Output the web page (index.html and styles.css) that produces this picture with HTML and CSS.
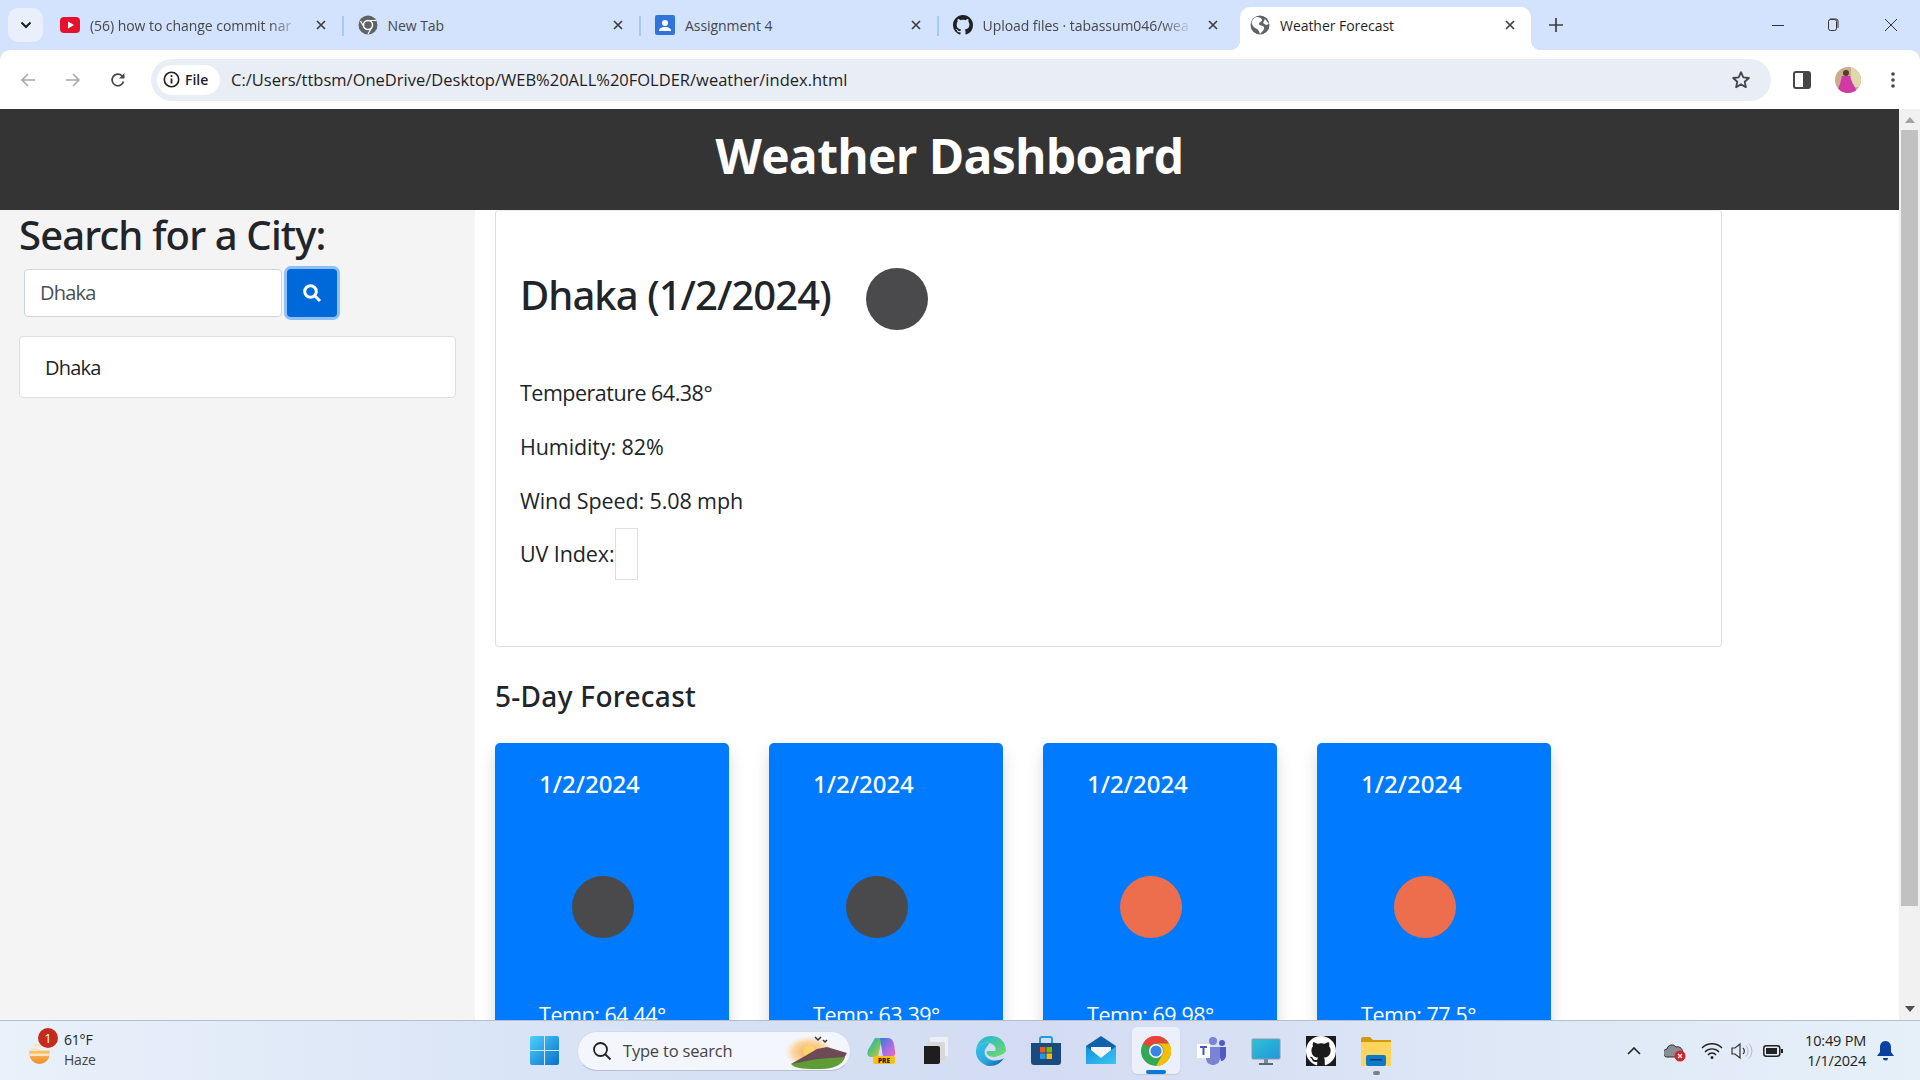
FILE: index.html
```html
<!DOCTYPE html>
<html lang="en">
<head>
<meta charset="utf-8">
<title>Weather Forecast</title>
<link rel="stylesheet" href="styles.css">
</head>
<body>
<svg class="defs" width="0" height="0" aria-hidden="true">
  <defs>
    <symbol id="x" viewBox="0 0 12 12"><path d="M2 2l8 8M10 2l-8 8" stroke="#3c4043" stroke-width="1.7" fill="none"/></symbol>
    <symbol id="globe" viewBox="0 0 20 20"><circle cx="10" cy="10" r="9.5" fill="#5f6368"/><path d="M6 2c3 0 6 1 6 3s-3 2-3 4 4 1 5 3-2 5-4 7c-1-2-1-4-3-5S3 12 2 9s2-6 4-7zM15 4l4 5-3 1-3-2z" fill="#fff"/></symbol>
    <symbol id="gh" viewBox="0 0 16 16"><path d="M8 0C3.58 0 0 3.58 0 8c0 3.54 2.29 6.53 5.47 7.59.4.07.55-.17.55-.38 0-.19-.01-.82-.01-1.49-2.01.37-2.53-.49-2.69-.94-.09-.23-.48-.94-.82-1.13-.28-.15-.68-.52-.01-.53.63-.01 1.08.58 1.23.82.72 1.21 1.87.87 2.33.66.07-.52.28-.87.51-1.07-1.78-.2-3.64-.89-3.64-3.95 0-.87.31-1.59.82-2.15-.08-.2-.36-1.02.08-2.12 0 0 .67-.21 2.2.82.64-.18 1.32-.27 2-.27.68 0 1.36.09 2 .27 1.53-1.04 2.2-.82 2.2-.82.44 1.1.16 1.92.08 2.12.51.56.82 1.27.82 2.15 0 3.07-1.87 3.75-3.65 3.95.29.25.54.73.54 1.48 0 1.07-.01 1.93-.01 2.2 0 .21.15.46.55.38A8.013 8.013 0 0016 8c0-4.42-3.58-8-8-8z"/></symbol>
    <linearGradient id="edgeG" x1="0" y1="0" x2="1" y2="1"><stop offset="0" stop-color="#35c1f1"/><stop offset=".55" stop-color="#2ea8dc"/><stop offset="1" stop-color="#0c59a4"/></linearGradient>
    <linearGradient id="edgeT" x1="0" y1="0" x2="1" y2="1"><stop offset="0" stop-color="#1bb5e8"/><stop offset="1" stop-color="#74dc5c"/></linearGradient>
    <linearGradient id="winG" x1="0" y1="0" x2="1" y2="1"><stop offset="0" stop-color="#4fd0fb"/><stop offset="1" stop-color="#0671cc"/></linearGradient>
    <linearGradient id="copG" x1="0" y1="0" x2="1" y2="1"><stop offset="0" stop-color="#1fa4e8"/><stop offset=".5" stop-color="#5dc46a"/><stop offset="1" stop-color="#f9b83a"/></linearGradient>
    <linearGradient id="copH" x1="0" y1="0" x2="1" y2="1"><stop offset="0" stop-color="#2a7de0"/><stop offset=".6" stop-color="#b46be0"/><stop offset="1" stop-color="#ee6fb0"/></linearGradient>
    <linearGradient id="monG" x1="0" y1="0" x2="1" y2="1"><stop offset="0" stop-color="#2fc1d6"/><stop offset="1" stop-color="#1f97d8"/></linearGradient>
    <linearGradient id="mailG" x1="0" y1="0" x2="1" y2="1"><stop offset="0" stop-color="#0f8fdc"/><stop offset="1" stop-color="#3cc6f4"/></linearGradient>
    <linearGradient id="sunG" x1="0" y1="0" x2="0" y2="1"><stop offset="0" stop-color="#fbc46a"/><stop offset="1" stop-color="#f08a28"/></linearGradient>
    <radialGradient id="glowG"><stop offset="0" stop-color="#f9a84e"/><stop offset=".7" stop-color="#fbd9a8"/><stop offset="1" stop-color="#fbe6c8" stop-opacity="0"/></radialGradient>
  </defs>
</svg>

<header class="tabstrip">
  <button class="tab-search"><svg width="12" height="8" viewBox="0 0 12 8"><path d="M1.5 1.5L6 6l4.5-4.5" fill="none" stroke="#1f1f1f" stroke-width="2"/></svg></button>
  <div class="tabs">
    <div class="tab sep">
      <svg class="fav" viewBox="0 0 20 20"><rect y="2" width="20" height="16" rx="4" fill="#e8112d"/><path d="M8 6.5v7l6-3.5z" fill="#fff"/></svg>
      <span class="tab-title fade">(56) how to change commit nar</span>
      <svg class="tab-x"><use href="#x"/></svg>
    </div>
    <div class="tab sep">
      <svg class="fav" viewBox="0 0 20 20"><circle cx="10" cy="10" r="9.5" fill="#5f6368"/><path d="M10 5.5h8M6.2 12.5L2.5 6M13.8 12.500L10 19" stroke="#fff" stroke-width="1.2"/><circle cx="10" cy="10" r="4.5" fill="#5f6368" stroke="#fff" stroke-width="1.5"/></svg>
      <span class="tab-title">New Tab</span>
      <svg class="tab-x"><use href="#x"/></svg>
    </div>
    <div class="tab sep">
      <svg class="fav" viewBox="0 0 20 20"><rect width="20" height="20" rx="2" fill="#3273dc"/><circle cx="10" cy="8" r="3" fill="#fff"/><path d="M4 16c0-3 3-4 6-4s6 1 6 4z" fill="#fff"/></svg>
      <span class="tab-title">Assignment 4</span>
      <svg class="tab-x"><use href="#x"/></svg>
    </div>
    <div class="tab">
      <svg class="fav"><use href="#gh"/></svg>
      <span class="tab-title fade">Upload files · tabassum046/wea</span>
      <svg class="tab-x"><use href="#x"/></svg>
    </div>
    <div class="tab tab-active">
      <svg class="fav"><use href="#globe"/></svg>
      <span class="tab-title">Weather Forecast</span>
      <svg class="tab-x"><use href="#x"/></svg>
    </div>
    <svg class="new-tab" width="14" height="14" viewBox="0 0 14 14"><path d="M7 0v14M0 7h14" stroke="#3c4043" stroke-width="1.7"/></svg>
  </div>
  <div class="win-controls">
    <svg width="12" height="12" viewBox="0 0 12 12"><path d="M0 6.500h12" stroke="#333" stroke-width="1"/></svg>
    <svg width="14" height="14" viewBox="0 0 14 14"><rect x="2.500" y="1.500" width="8" height="11" rx="2" fill="#d3e3fd" stroke="#333"/><path d="M5 1.500V1h6a2 2 0 012 2v7" fill="none" stroke="#333" transform="translate(-1 0)"/></svg>
    <svg width="14" height="14" viewBox="0 0 14 14"><path d="M1 1l12 12M13 1L1 13" stroke="#333" stroke-width="1"/></svg>
  </div>
</header>

<nav class="toolbar">
  <svg class="nav-ico" viewBox="0 0 16 16"><path d="M15 8H2M8 2L2 8l6 6" fill="none" stroke="#a6a8ab" stroke-width="1.6"/></svg>
  <svg class="nav-ico" viewBox="0 0 16 16"><path d="M1 8h13M8 2l6 6-6 6" fill="none" stroke="#a6a8ab" stroke-width="1.6"/></svg>
  <svg class="nav-ico" viewBox="0 0 16 16"><path d="M13.500 9.500A5.800 5.800 0 1112 3.800" fill="none" stroke="#444746" stroke-width="1.7"/><path d="M14.500 1v5.500H9z" fill="#444746"/></svg>
  <div class="omnibox">
    <div class="chip">
      <svg width="17" height="17" viewBox="0 0 17 17"><circle cx="8.500" cy="8.500" r="7.200" fill="none" stroke="#1f1f1f" stroke-width="1.600"/><path d="M8.500 7.500v5" stroke="#1f1f1f" stroke-width="1.800"/><circle cx="8.500" cy="5" r="1.100" fill="#1f1f1f"/></svg>
      <span>File</span>
    </div>
    <span class="url">C:/Users/ttbsm/OneDrive/Desktop/WEB%20ALL%20FOLDER/weather/index.html</span>
    <svg class="star" width="20" height="20" viewBox="0 0 20 20"><path d="M10 2.200l2.300 5.200 5.600.6-4.200 3.700 1.200 5.500-4.900-2.800-4.900 2.800 1.200-5.500L2.100 8l5.600-.6z" fill="none" stroke="#444746" stroke-width="1.800" stroke-linejoin="round"/></svg>
  </div>
  <svg class="panel-ico" width="18" height="18" viewBox="0 0 18 18"><rect x="1" y="1" width="16" height="16" rx="2" fill="#fff" stroke="#444746" stroke-width="2"/><rect x="10" y="1" width="7" height="16" fill="#444746"/></svg>
  <svg class="avatar" width="26" height="26" viewBox="0 0 26 26"><defs><clipPath id="av"><circle cx="13" cy="13" r="13"/></clipPath></defs><g clip-path="url(#av)"><rect width="26" height="26" fill="#c9ad8c"/><rect x="16" width="10" height="20" fill="#e0d6b0"/><circle cx="11" cy="6" r="3" fill="#5a3a2a"/><path d="M7 9h8l2 6 6 11H1l4-9z" fill="#d13aa5"/></g></svg>
  <svg class="kebab" width="4" height="16" viewBox="0 0 4 16"><circle cx="2" cy="2" r="1.800" fill="#444746"/><circle cx="2" cy="8" r="1.800" fill="#444746"/><circle cx="2" cy="14" r="1.800" fill="#444746"/></svg>
</nav>

<div class="viewport">
  <div class="page">
    <div class="dash-header"><h1>Weather Dashboard</h1></div>
    <div class="dash-body">
      <aside class="sidebar">
        <h2 class="search-title">Search for a City:</h2>
        <form class="search-form">
          <div class="search-input">Dhaka</div>
          <button class="search-btn" type="button"><svg width="20" height="20" viewBox="0 0 20 20"><circle cx="8.500" cy="8.500" r="5.800" fill="none" stroke="#fff" stroke-width="3"/><path d="M13 13l5 5" stroke="#fff" stroke-width="3"/></svg></button>
        </form>
        <div class="history-item">Dhaka</div>
      </aside>
      <main class="main">
        <section class="today">
          <div class="today-head">
            <h2>Dhaka (1/2/2024)</h2>
            <span class="dot dot-dark"></span>
          </div>
          <p class="temp">Temperature 64.38°</p>
          <p>Humidity: 82%</p>
          <p>Wind Speed: 5.08 mph</p>
          <div class="uv"><span>UV Index:</span><span class="uv-box"></span></div>
        </section>
        <h3 class="forecast-title">5-Day Forecast</h3>
        <div class="forecast">
          <article class="day">
            <h4>1/2/2024</h4>
            <div class="day-icon"><span class="dot dot-dark"></span></div>
            <p>Temp: 64.44°</p>
          </article>
          <article class="day">
            <h4>1/2/2024</h4>
            <div class="day-icon"><span class="dot dot-dark"></span></div>
            <p>Temp: 63.39°</p>
          </article>
          <article class="day">
            <h4>1/2/2024</h4>
            <div class="day-icon"><span class="dot dot-orange"></span></div>
            <p>Temp: 69.98°</p>
          </article>
          <article class="day">
            <h4>1/2/2024</h4>
            <div class="day-icon"><span class="dot dot-orange"></span></div>
            <p>Temp: 77.5°</p>
          </article>
        </div>
      </main>
    </div>
  </div>
  <div class="scrollbar">
    <svg width="10" height="6" viewBox="0 0 10 6"><path d="M5 0l5 6H0z" fill="#a3a3a3"/></svg>
    <div class="thumb"></div>
    <svg class="arrow-down" width="10" height="6" viewBox="0 0 10 6"><path d="M0 0h10L5 6z" fill="#505050"/></svg>
  </div>
</div>

<footer class="taskbar">
  <div class="tb-weather">
    <div class="weather-ico">
      <svg width="29" height="22" viewBox="0 0 30 26"><path d="M3 10h24v4a12 12 0 01-24 0z" fill="url(#sunG)"/><path d="M8 4h12M5 9h9M3 15h24" stroke="#f7e5bd" stroke-width="3"/></svg>
      <span class="badge">1</span>
    </div>
    <div class="weather-txt"><span>61°F</span><span class="haze">Haze</span></div>
  </div>
  <div class="tb-center">
    <svg class="tb-ico win" viewBox="0 0 29 29"><path d="M0 2a2 2 0 012-2h12v14H0zM15 0h12a2 2 0 012 2v12H15zM0 15h14v14H2a2 2 0 01-2-2zM15 15h14v12a2 2 0 01-2 2H15z" fill="url(#winG)"/></svg>
    <div class="search-pill">
      <svg width="20" height="20" viewBox="0 0 20 20"><circle cx="8.500" cy="8.500" r="6.500" fill="none" stroke="#222" stroke-width="1.800"/><path d="M13 13l5.500 5.500" stroke="#222" stroke-width="1.800"/></svg>
      <span>Type to search</span>
      <svg class="scene" width="64" height="38" viewBox="0 0 64 38"><ellipse cx="24" cy="20" rx="24" ry="16" fill="url(#glowG)"/><circle cx="24" cy="19" r="6" fill="#fcd56a"/><path d="M6 32l14-8 12-7 10-2 20 6-3 5-30 6z" fill="#6d4a55"/><path d="M6 32l26-5 28-2c-2 8-12 12-24 12-14 0-26 0-30-5z" fill="#5f9c36"/><path d="M30 5l3 3 3-3M38 8l2 2 2-2" fill="none" stroke="#40302a" stroke-width="1.500"/></svg>
    </div>
    <svg class="tb-ico copilot" viewBox="0 0 30 30"><path d="M9 2h7l-4 19H5C1 21 1 17 2 14z" fill="url(#copG)"/><path d="M14 2h8c3 0 5 2 6 6l1 7c1 4-1 6-4 6h-8z" fill="url(#copH)"/><rect x="7" y="20" width="22" height="8" rx="2" fill="#fbbf10"/><text x="18" y="26.500" class="pre">PRE</text></svg>
    <svg class="tb-ico" viewBox="0 0 30 30"><rect x="9" y="1" width="18" height="19" rx="1" fill="#f4f4f6" opacity=".75"/><rect x="6" y="6" width="18" height="19" rx="1" fill="#d8d8da"/><path d="M3 10h14a2 2 0 012 2v14a2 2 0 01-2 2H3z" fill="#1e1e1e"/></svg>
    <svg class="tb-ico" viewBox="0 0 30 30"><path d="M15 0C7 0 1 6 0 14c3-6 8-8 13-7 6 1 8 6 6 8h-7c-1 0-2 1-1 3 2 3 7 4 11 2 3-1 6-2 8-5C30 6 24 0 15 0z" fill="url(#edgeT)"/><path d="M0 14c-1 8 6 16 14 16 6 0 11-3 14-8-3 2-10 4-15 1-4-2-6-7-3-11 1-2 3-3 3-5C7 6 2 9 0 14z" fill="url(#edgeG)"/></svg>
    <svg class="tb-ico" viewBox="0 0 30 30"><path d="M9 8V3a2 2 0 012-2h8a2 2 0 012 2v5" fill="none" stroke="#1f9fe0" stroke-width="2"/><path d="M0 7h30v19a3 3 0 01-3 3H3a3 3 0 01-3-3z" fill="#1b4a80"/><rect x="9" y="11" width="5.500" height="5.500" fill="#ef5a24"/><rect x="15.500" y="11" width="5.500" height="5.500" fill="#7fba00"/><rect x="9" y="17.500" width="5.500" height="5.500" fill="#1e9bf0"/><rect x="15.500" y="17.500" width="5.500" height="5.500" fill="#ffb900"/></svg>
    <svg class="tb-ico" viewBox="0 0 30 30"><path d="M15 0L30 10v18H0V10z" fill="#0c62ad"/><path d="M5 11h20v8l-10 5-10-5z" fill="#f4f4f4"/><path d="M0 10l15 12 15-12v18H0z" fill="url(#mailG)"/></svg>
    <div class="chrome-slot">
      <svg width="30" height="30" viewBox="0 0 30 30"><circle cx="15" cy="15" r="15" fill="#34a853"/><path d="M2 7.500A15 15 0 0128 7.500H15a7.500 7.500 0 00-6.500 3.700z" fill="#ea4335"/><path d="M28 7.500A15 15 0 0115 30l6.500-11.300A7.500 7.500 0 0021.500 11 7.500 7.500 0 0015 7.500z" fill="#fbbc04"/><circle cx="15" cy="15" r="7" fill="#fff"/><circle cx="15" cy="15" r="5.500" fill="#3b82e8"/></svg>
      <span class="chrome-bar"></span>
    </div>
    <svg class="tb-ico teams" viewBox="0 0 30 30"><circle cx="16" cy="5" r="4" fill="#7b83d4"/><circle cx="25" cy="7" r="3" fill="#5059c9"/><path d="M20 11h9v8c0 4-3 6-5 6z" fill="#5059c9"/><path d="M9 11h14v11c0 5-4 7-7 7s-7-2-7-7z" fill="#7b83d4"/><rect y="8" width="13" height="14" fill="#fff"/><path d="M3 11h7M6.500 11v8" stroke="#4b53bc" stroke-width="2"/></svg>
    <svg class="tb-ico" viewBox="0 0 30 30"><rect x="1" y="3" width="28" height="20" rx="1" fill="url(#monG)" stroke="#8c9aa8"/><rect x="13" y="23" width="4" height="4" fill="#7c8a94"/><rect x="8" y="27" width="14" height="2" fill="#5c6870"/></svg>
    <div class="gh-tile"><svg width="30" height="30"><use href="#gh"/></svg></div>
    <div class="explorer">
      <svg width="30" height="30" viewBox="0 0 30 30"><path d="M0 3a2 2 0 012-2h7l3 3h18v4H0z" fill="#d39b0a"/><rect y="6" width="30" height="24" fill="#fdd45c"/><rect x="5" y="19" width="20" height="11" rx="2" fill="#0f78c9"/><rect x="9" y="23" width="12" height="1.500" fill="#0b3f70"/></svg>
      <span class="run-dot"></span>
    </div>
  </div>
  <div class="tray">
    <svg width="14" height="8" viewBox="0 0 14 8"><path d="M1 7l6-6 6 6" fill="none" stroke="#222" stroke-width="1.600"/></svg>
    <svg class="tray-cloud" width="22" height="22" viewBox="0 0 22 22"><path d="M4 17a4 4 0 01-1-8 5 5 0 019-2 5 5 0 013 10z" fill="#8a8d92" stroke="#333" stroke-width="1"/><circle cx="16" cy="16" r="5.500" fill="#d6202c"/><path d="M14 14l4 4M18 14l-4 4" stroke="#fff" stroke-width="1.400"/></svg>
    <svg class="tray-wifi" width="22" height="18" viewBox="0 0 22 18"><path d="M1 6a14 14 0 0120 0M4 10a9.500 9.500 0 0114 0M7 13a5 5 0 018 0" fill="none" stroke="#222" stroke-width="1.400"/><circle cx="11" cy="15.500" r="1.500" fill="#222"/></svg>
    <svg class="tray-vol" width="22" height="18" viewBox="0 0 22 18"><path d="M1 6h3l5-4v14l-5-4H1z" fill="none" stroke="#333" stroke-width="1.200"/><path d="M12 6a4 4 0 010 6" fill="none" stroke="#333" stroke-width="1.200"/><path d="M15 3.500a8 8 0 010 11M18 1.500a11 11 0 010 15" fill="none" stroke="#b5bcc6" stroke-width="1"/></svg>
    <svg class="tray-bat" width="20" height="12" viewBox="0 0 20 12"><rect x=".8" y=".8" width="16" height="10.400" rx="2.500" fill="none" stroke="#222" stroke-width="1.500"/><rect x="3" y="3" width="11" height="6" fill="#222"/><rect x="18" y="4" width="2" height="4" fill="#222"/></svg>
    <div class="clock"><span>10:49 PM</span><span>1/1/2024</span></div>
    <svg class="bell" width="17" height="20" viewBox="0 0 17 20"><path d="M8.500 0C5 0 3 3 3 6v5L0 15h17l-3-4V6c0-3-2-6-5.500-6z" fill="#0b3fa0"/><path d="M6 17h5a2.500 2.500 0 01-5 0z" fill="#0b3fa0"/></svg>
  </div>
</footer>
</body>
</html>
```
FILE: styles.css
```css
* { box-sizing: border-box; }
html, body { height: 100%; }
body {
  margin: 0;
  height: 100vh;
  overflow: hidden;
  display: flex;
  flex-direction: column;
  background: #d3e3fd;
  font-family: "Open Sans", "Noto Sans", "Liberation Sans", sans-serif;
  color: #212529;
}
.defs { position: absolute; }
h1, h2, h3, h4, p { margin: 0; }

/* Tab strip */
.tabstrip { height: 50px; flex: none; display: flex; position: relative; }
.tab-search {
  width: 35px; height: 34px; margin: 8px 3px 0 8px; padding: 0; border: 0;
  border-radius: 10px; background: #e9f0fc;
  display: flex; align-items: center; justify-content: center;
}
.tabs { display: flex; align-items: center; height: 50px; flex: 1; }
.tab {
  width: 297.5px; height: 37px; margin-top: 13px; padding: 0 17px 0 14px;
  display: flex; align-items: center; position: relative; font-size: 14px; color: #45474a;
}
.sep::after {
  content: ""; position: absolute; right: 0; top: 3px; height: 20px; width: 2px; background: #a8c7fa;
}
.fav { width: 20px; height: 20px; flex: none; margin-right: 10px; margin-top: -13px; fill: #202124; }
.tab-title { flex: 1; white-space: nowrap; margin-top: -13px; letter-spacing: -.05px; }
.fade { -webkit-mask-image: linear-gradient(to right, #000 85%, transparent 100%); mask-image: linear-gradient(to right, #000 85%, transparent 100%); }
.tab-x { width: 12px; height: 12px; flex: none; margin-top: -13px; margin-left: 14px; }
.tab-active {
  width: 291px; margin-left: 4px; padding-left: 10px; padding-right: 15px; height: 43px; margin-top: 7px;
  background: #fff; border-radius: 10px 10px 0 0; color: #1f1f1f;
}
.tab-active .fav, .tab-active .tab-title, .tab-active .tab-x { margin-top: -7px; }
.tab-active::before, .tab-active::after {
  content: ""; position: absolute; bottom: 0; width: 10px; height: 10px;
}
.tab-active::before { left: -10px; background: radial-gradient(circle at 0 0, transparent 10px, #fff 10.5px); }
.tab-active::after { right: -10px; background: radial-gradient(circle at 100% 0, transparent 10px, #fff 10.5px); }
.new-tab { margin: 0 0 0 18px; flex: none; }
.win-controls {
  position: absolute; right: 22px; top: 18px; display: flex; gap: 42px; align-items: center;
}
.win-controls svg:last-child { margin-left: 2px; }

/* Toolbar */
.toolbar {
  height: 59px; flex: none; background: #fff; border-radius: 10px 10px 0 0;
  display: flex; align-items: center; padding-left: 20px;
}
.nav-ico { width: 16px; height: 16px; margin-right: 29px; flex: none; }
.nav-ico:nth-of-type(3) { margin-right: 25px; }
.omnibox {
  width: 1620px; height: 42px; border-radius: 21px; background: #e9edf6; flex: none;
  display: flex; align-items: center; padding: 0 20px 0 6px; font-size: 16.5px;
}
.chip {
  width: 63px; height: 30px; border-radius: 15px; background: #fff; flex: none;
  display: flex; align-items: center; gap: 5px; padding-left: 6px; font-size: 14px; font-weight: 600; color: #1f1f1f;
}
.url { flex: 1; margin-left: 11px; color: #1f1f1f; white-space: nowrap; }
.star { flex: none; }
.panel-ico { margin-left: 22px; flex: none; }
.avatar { margin-left: 24px; flex: none; }
.kebab { margin-left: 30px; flex: none; }

/* Page viewport */
.viewport { height: 911px; flex: none; display: flex; background: #fff; overflow: hidden; }
.page { width: 1899px; flex: none; display: flex; flex-direction: column; }
.dash-header {
  height: 101px; flex: none; background: #343434; color: #fff; text-align: center;
  display: flex; align-items: center; justify-content: center; padding-bottom: 8px;
}
.dash-header h1 { font-size: 48px; line-height: 58px; font-weight: 700; letter-spacing: -.7px; }
.dash-body { flex: 1; display: flex; min-height: 0; }
.sidebar { width: 475px; flex: none; background: #f4f4f4; padding: 0 19px 0 19px; }
.search-title { font-family: "Noto Sans", "Open Sans", sans-serif; font-size: 40px; line-height: 48px; font-weight: 500; margin-bottom: 10px; margin-top: 1px; letter-spacing: -.85px; }
.search-form { display: flex; margin-left: 5px; align-items: center; }
.search-input {
  width: 258px; height: 48px; border: 1px solid #ced4da; border-radius: 4px; background: #fff;
  padding-left: 15px; font-size: 20px; line-height: 46px; color: #495057; letter-spacing: -.8px;
}
.search-btn {
  width: 50px; height: 48px; margin-left: 5px; border: 0; padding: 0; border-radius: 4px; background: #0069d9;
  box-shadow: 0 0 0 3px #8dc0fb; display: flex; align-items: center; justify-content: center;
}
.history-item {
  height: 62px; margin-top: 19px; border: 1px solid #dfdfdf; border-radius: 4px; background: #fff;
  padding-left: 25px; font-size: 20px; line-height: 61px; letter-spacing: -.8px;
}
.main { flex: 1; padding-left: 20px; min-width: 0; }
.today {
  width: 1227px; height: 437px; border: 1px solid #dfdfdf; border-top-color: #eee; border-radius: 4px;
  padding: 57px 0 0 24px;
}
.today-head { display: flex; align-items: flex-start; margin-bottom: 48px; }
.today-head h2 { font-family: "Noto Sans", "Open Sans", sans-serif; font-size: 40px; line-height: 54px; font-weight: 500; letter-spacing: -.95px; }
.dot { display: block; width: 62px; height: 62px; border-radius: 50%; }
.dot-dark { background: #4a4a4c; }
.dot-orange { background: #ec6e4c; }
.today-head .dot { margin-left: 35px; }
.today p { font-size: 21.5px; line-height: 30px; margin-bottom: 24px; letter-spacing: -.1px; }
.today .temp { letter-spacing: -.5px; }
.uv { display: flex; align-items: center; font-size: 21.5px; line-height: 30px; margin-top: -12px; letter-spacing: -.1px; }
.uv-box { display: block; width: 23px; height: 52px; border: 1px solid #dfdfdf; }
.forecast-title { font-family: "Noto Sans", "Open Sans", sans-serif; font-size: 28px; line-height: 34px; font-weight: 500; margin-top: 32px; letter-spacing: .3px; }
.forecast { display: flex; gap: 40px; margin-top: 30px; }
.day {
  width: 234px; height: 400px; flex: none; background: #007bff; color: #fff; border-radius: 5px;
  padding: 24px 0 0 44px; box-shadow: 0 8px 16px rgba(0,0,0,.15);
}
.day h4 { font-family: "Noto Sans", "Open Sans", sans-serif; font-size: 24px; line-height: 34px; font-weight: 500; letter-spacing: 0; }
.day-icon { margin: 75px 0 0 33px; height: 62px; }
.day p { font-size: 21.5px; line-height: 30px; margin-top: 62px; letter-spacing: -.45px; }

.scrollbar {
  width: 21px; flex: none; background: #f1f1f1; display: flex; flex-direction: column; align-items: center;
  padding: 8px 0;
}
.scrollbar svg { display: block; flex: none; }
.thumb { width: 17px; height: 776px; margin-top: 7px; background: #c1c1c1; flex: none; }
.arrow-down { margin-top: auto; }

/* Taskbar */
.taskbar {
  height: 60px; flex: none; display: flex; align-items: center; position: relative;
  border-top: 1px solid #b6bfd0;
  background: linear-gradient(90deg, #e9f1fa 0%, #d8e3f6 30%, #d3dcf2 55%, #dde6f6 75%, #e6f0f9 100%);
  font-size: 14px; color: #222;
}
.tb-weather { width: 530px; flex: none; display: flex; align-items: center; padding-left: 25px; }
.weather-ico { width: 39px; height: 36px; position: relative; padding-top: 9px; flex: none; }
.badge {
  position: absolute; left: 13px; top: -5px; width: 20px; height: 20px; border-radius: 50%;
  background: #c42b1c; color: #fff; font-size: 13px; line-height: 20px; text-align: center;
}
.weather-txt { display: flex; flex-direction: column; line-height: 20px; font-size: 14px; letter-spacing: -.2px; margin-top: -2px; }
.haze { color: #444; }
.tb-center { display: flex; align-items: center; flex: none; }
.tb-ico { width: 30px; height: 30px; flex: none; margin-right: 25px; }
.win { width: 29px; height: 29px; margin-right: 18px; }
.search-pill {
  width: 274px; height: 40px; border-radius: 20px; background: #f3f6fd; flex: none; margin-right: 15px;
  border: 1px solid #d5dbe8; border-bottom-color: #b9c0d0;
  display: flex; align-items: center; padding-left: 14px; position: relative; font-size: 16.500px; color: #444;
  letter-spacing: -.2px;
}
.search-pill span { margin-left: 11px; }
.scene { position: absolute; right: 1px; top: 0; }
.pre { font-family: "Open Sans", sans-serif; font-size: 6.500px; font-weight: 800; text-anchor: middle; fill: #222; }
.chrome-slot {
  width: 48px; height: 47px; border-radius: 5px; background: #ecf0fa; margin: 0 17px 0 -9px; flex: none;
  display: flex; align-items: center; justify-content: center; position: relative; box-shadow: 0 1px 1px rgba(0,0,0,.1);
}
.chrome-bar { position: absolute; left: 14px; bottom: 0; width: 20px; height: 4px; border-radius: 2px; background: #0a78d4; }
.teams { margin-right: 24px; }
.gh-tile { width: 30px; height: 30px; background: #1b1b1b; fill: #fff; margin-right: 25px; flex: none; }
.gh-tile svg { display: block; }
.explorer { width: 30px; height: 30px; position: relative; flex: none; }
.explorer svg { display: block; }
.run-dot { position: absolute; left: 12px; top: 35px; width: 7px; height: 4px; border-radius: 2px; background: #7b7f88; }
.tray { margin-left: auto; display: flex; align-items: center; padding-right: 26px; }
.tray-cloud { margin-left: 23px; }
.tray-wifi { margin-left: 15px; }
.tray-vol { margin-left: 8px; }
.tray-bat { margin-left: 10px; }
.clock { display: flex; flex-direction: column; align-items: flex-end; margin-left: 22px; line-height: 20px; font-size: 14.500px; letter-spacing: -.2px; }
.bell { margin-left: 11px; }
```
